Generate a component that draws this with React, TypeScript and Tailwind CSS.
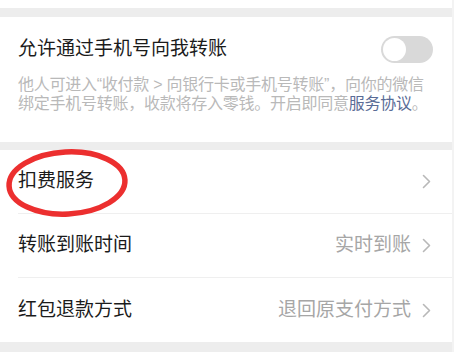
import React from 'react';

const font = { fontFamily: '"Liberation Sans", "Noto Sans CJK SC", sans-serif' };

const Chevron = () => (
    <svg width="9" height="15" viewBox="0 0 9 15" fill="none" className="ml-[11px] shrink-0">
        <path d="M1.5 1.5 L7.5 7.5 L1.5 13.5" stroke="#b8b8b8" strokeWidth="1.6" strokeLinecap="round" strokeLinejoin="round" />
    </svg>
);

const Row = ({ label, value, last }: { label: string; value?: string; last?: boolean }) => (
    <div className="pl-[18px]">
        <div className={`flex h-[64px] items-center pr-[21px] ${last ? '' : 'border-b border-[#efefef]'}`}>
            <span className="flex-1 text-[19px] text-[#1b1b1b]">{label}</span>
            {value && <span className="text-[19px] text-[#a6a6a6]">{value}</span>}
            <Chevron />
        </div>
    </div>
);

export default function App() {
    return (
        <div className="relative flex h-[352px] w-[454px] overflow-hidden bg-[#ededed]" style={font}>
            <div className="flex flex-1 flex-col">
                {/* end of previous card */}
                <div className="h-[8px] bg-white" />
                <div className="h-[9px]" />

                {/* switch card */}
                <div className="bg-white pb-[29px] pl-[18px] pr-[19px] pt-[19px]">
                    <div className="flex h-[27px] items-center justify-between">
                        <span className="text-[19px] text-[#1b1b1b]">允许通过手机号向我转账</span>
                        <div className="flex h-[27px] w-[52px] items-center rounded-full bg-[#d9d9d9] px-[2px]">
                            <div className="h-[23px] w-[23px] rounded-full bg-white" />
                        </div>
                    </div>
                    <div className="mt-[12px] whitespace-nowrap text-[16px] leading-[19px] tracking-[-0.25px] text-[#b9b9b9]">
                        <div>他人可进入“收付款 &gt; 向银行卡或手机号转账”，向你的微信</div>
                        <div>
                            绑定手机号转账，收款将存入零钱。开启即同意<span className="text-[#5a6c96]">服务协议</span>。
                        </div>
                    </div>
                </div>

                <div className="h-[8px]" />

                {/* list card */}
                <div className="bg-white">
                    <Row label="扣费服务" />
                    <Row label="转账到账时间" value="实时到账" />
                    <Row label="红包退款方式" value="退回原支付方式" last />
                </div>
            </div>
            <div className="w-[2px] bg-[#f3f3f3]" />

            {/* red marker ellipse drawn over the first row */}
            <svg className="pointer-events-none absolute left-0 top-[146px]" width="140" height="76" viewBox="0 0 140 76">
                <ellipse cx="67" cy="37" rx="58" ry="31" fill="none" stroke="#ec2f2f" strokeWidth="5.5" transform="rotate(-3 67 37)" />
            </svg>
        </div>
    );
}
